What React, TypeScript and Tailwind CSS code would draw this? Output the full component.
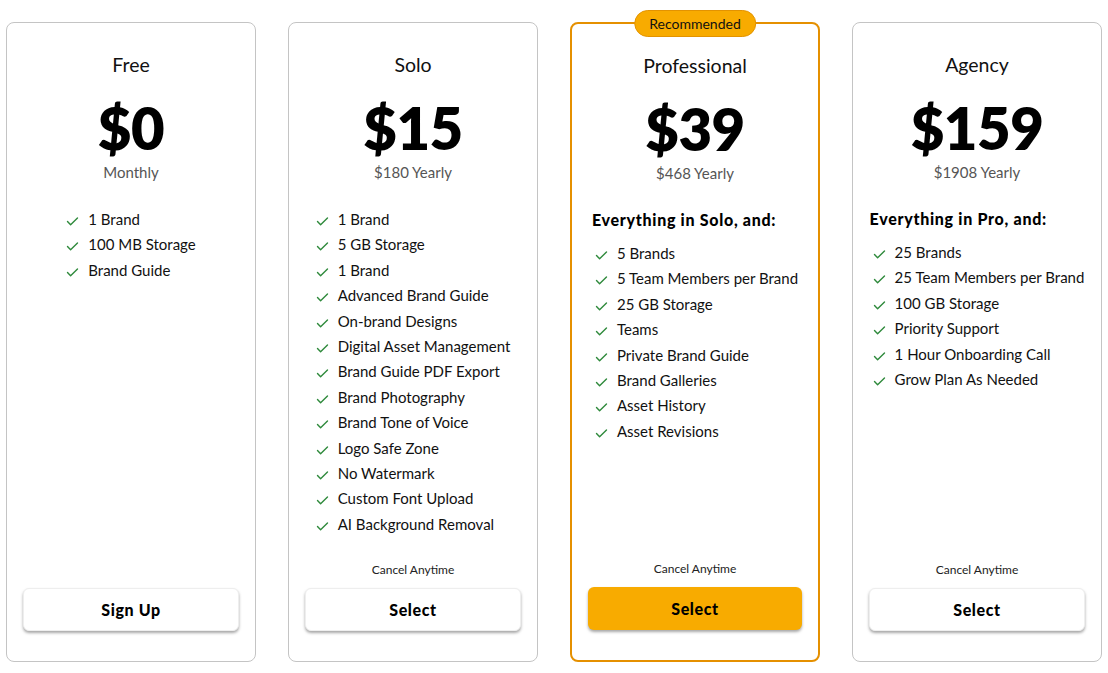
import React from "react";

type Plan = {
  name: string;
  price: string;
  sub: string;
  heading?: string;
  features: string[];
  cancel: boolean;
  button: string;
  featured?: boolean;
};

const plans: Plan[] = [
  { name: "Free", price: "$0", sub: "Monthly", features: ["1 Brand", "100 MB Storage", "Brand Guide"], cancel: false, button: "Sign Up" },
  {
    name: "Solo",
    price: "$15",
    sub: "$180 Yearly",
    features: [
      "1 Brand",
      "5 GB Storage",
      "1 Brand",
      "Advanced Brand Guide",
      "On-brand Designs",
      "Digital Asset Management",
      "Brand Guide PDF Export",
      "Brand Photography",
      "Brand Tone of Voice",
      "Logo Safe Zone",
      "No Watermark",
      "Custom Font Upload",
      "AI Background Removal",
    ],
    cancel: true,
    button: "Select",
  },
  {
    name: "Professional",
    price: "$39",
    sub: "$468 Yearly",
    heading: "Everything in Solo, and:",
    features: ["5 Brands", "5 Team Members per Brand", "25 GB Storage", "Teams", "Private Brand Guide", "Brand Galleries", "Asset History", "Asset Revisions"],
    cancel: true,
    button: "Select",
    featured: true,
  },
  {
    name: "Agency",
    price: "$159",
    sub: "$1908 Yearly",
    heading: "Everything in Pro, and:",
    features: ["25 Brands", "25 Team Members per Brand", "100 GB Storage", "Priority Support", "1 Hour Onboarding Call", "Grow Plan As Needed"],
    cancel: true,
    button: "Select",
  },
];

function Check() {
  return (
    <svg width="13" height="10" viewBox="0 0 13 10" className="shrink-0 mt-[9px]">
      <path d="M1.5 5.5 L4.6 8.8 L11.5 2" fill="none" stroke="#2f8a3c" strokeWidth="1.4" strokeLinecap="round" strokeLinejoin="round" />
    </svg>
  );
}

function Card({ p }: { p: Plan }) {
  return (
    <div
      className={`relative w-[250px] h-[640px] rounded-[8px] bg-white flex flex-col items-center pt-[28px] pb-[30px] px-[16px] ${
        p.featured ? "border-2 border-[#e59000]" : "border border-[#c4c4c4]"
      }`}
    >
      {p.featured && (
        <div className="absolute -top-[14px] left-1/2 -translate-x-1/2 h-[27px] px-[14px] rounded-full bg-[#f8ab00] border border-[#e39300] flex items-center text-[14px] text-[#111]">
          Recommended
        </div>
      )}
      <div className="text-[19.5px] leading-[28px] text-[#111]">{p.name}</div>
      <div className="mt-[19px] text-[58px] leading-[60px] font-extrabold text-black tracking-[-0.5px]">{p.price}</div>
      <div className="mt-[4px] text-[15px] leading-[20px] text-[#555]">{p.sub}</div>
      <div className="mt-[25px] flex flex-col">
        {p.heading && (
          <div className="text-[16px] leading-[24px] font-black tracking-[0.7px] text-black mb-[9px] whitespace-nowrap">{p.heading}</div>
        )}
        <ul className={`flex flex-col ${p.heading ? "pl-[3px]" : ""}`}>
          {p.features.map((f, i) => (
            <li key={i} className="flex items-start gap-[9px] h-[25.4px] leading-[25.4px] text-[15px] text-[#111] whitespace-nowrap">
              <Check />
              <span>{f}</span>
            </li>
          ))}
        </ul>
      </div>
      <div className="flex-1" />
      {p.cancel && <div className="text-[12px] leading-[16px] text-[#222]">Cancel Anytime</div>}
      <button
        className={`mt-[10px] w-full h-[43px] rounded-[6px] text-[16px] font-black tracking-[0.6px] text-black ${
          p.featured
            ? "bg-[#f8ab00] shadow-[0_2px_3px_rgba(0,0,0,0.35)]"
            : "bg-white border border-[#eeeeee] shadow-[0_2px_3px_rgba(0,0,0,0.35)]"
        }`}
      >
        {p.button}
      </button>
    </div>
  );
}

export default function App() {
  return (
    <div className="w-[1108px] h-[673px] bg-white overflow-hidden" style={{ fontFamily: "Lato, 'Noto Sans', sans-serif" }}>
      <div className="flex gap-[32px] px-[6px] pt-[22px]">
        {plans.map((p) => (
          <Card key={p.name} p={p} />
        ))}
      </div>
    </div>
  );
}
